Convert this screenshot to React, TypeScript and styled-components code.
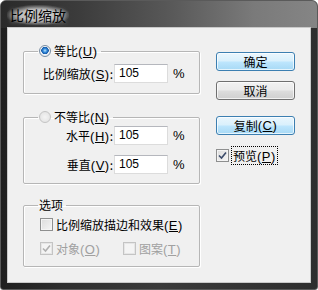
import React from "react";
import styled, { createGlobalStyle } from "styled-components";

const GlobalStyle = createGlobalStyle`
  html, body {
    margin: 0;
    padding: 0;
    background: #ffffff;
  }
  body {
    font-family: "Noto Sans CJK SC", "Liberation Sans", sans-serif;
    font-size: 12px;
    color: #000;
  }
`;

const Window = styled.div`
  width: 318px;
  height: 290px;
  box-sizing: border-box;
  display: flex;
  flex-direction: column;
  border: 1px solid #5a5a5a;
  border-radius: 6px 6px 3px 3px;
  background: linear-gradient(to right, #1f1f1f 0%, #2e2e2e 20%, #3a3a3a 50%, #2e2e2e 100%);
  overflow: hidden;
`;

const TitleBar = styled.div`
  height: 27px;
  flex: none;
  display: flex;
  align-items: center;
  padding-left: 6px;
  background: linear-gradient(to right, #2a2a2a 0%, #3c3c3c 25%, #5a5a5a 55%, #7a7a7a 80%, #858585 100%);
`;

const Title = styled.span`
  font-size: 14px;
  color: #000;
  padding: 0 3px;
  border-radius: 8px;
  background: radial-gradient(ellipse at center, rgba(205, 205, 205, 0.85) 40%, rgba(160, 160, 160, 0) 75%);
  text-shadow: 0 0 4px rgba(255, 255, 255, 0.6);
`;

const Client = styled.div`
  flex: 1;
  margin: 0 7px 7px 7px;
  background: #f0f0f0;
  box-shadow: 0 0 0 1px #c9c9c9;
  display: flex;
  align-items: flex-start;
`;

const LeftColumn = styled.div`
  width: 177px;
  margin-left: 15px;
  padding-top: 16px;
  display: flex;
  flex-direction: column;
`;

const Group = styled.fieldset<{ $gap?: number; $padTop: number; $padBottom: number }>`
  margin: ${(p) => p.$gap ?? 0}px 0 0 0;
  padding: ${(p) => p.$padTop}px 0 ${(p) => p.$padBottom}px 16px;
  border: 1px solid #b6b6b6;
  box-shadow: inset 1px 1px 0 #fff, 1px 1px 0 #fff;
  border-radius: 2px;
  min-width: 0;
  display: flex;
  flex-direction: column;
`;

const Legend = styled.legend`
  margin-left: -2px;
  padding: 0 3px 0 1px;
  height: 14px;
  line-height: 14px;
  display: flex;
  align-items: center;
  gap: 3px;
  font-size: 12px;
`;

const Key = styled.span`
  font-family: "Liberation Sans", sans-serif;
  font-size: 13px;
  letter-spacing: 0.5px;
`;

const Row = styled.div<{ $mt?: number }>`
  display: flex;
  align-items: center;
  height: 20px;
  margin-top: ${(p) => p.$mt ?? 0}px;
`;

const Label = styled.label`
  width: 73px;
  text-align: right;
  white-space: nowrap;
  font-size: 12px;
  padding-right: 1px;
`;

const Input = styled.div`
  width: 54px;
  height: 19px;
  box-sizing: border-box;
  background: #fff;
  border: 1px solid #dcdcdc;
  border-top-color: #b5b7bd;
  padding-left: 4px;
  line-height: 17px;
  font-size: 12px;
  font-family: "Liberation Sans", sans-serif;
`;

const Unit = styled.span`
  margin-left: 5px;
  font-family: "Liberation Sans", sans-serif;
  font-size: 13px;
`;

const Radio = styled.span<{ $on?: boolean }>`
  width: 12px;
  height: 12px;
  box-sizing: border-box;
  border-radius: 50%;
  border: 1px solid ${(p) => (p.$on ? "#7b8fa3" : "#c4c4c4")};
  background: ${(p) =>
    p.$on
      ? "radial-gradient(circle at 50% 45%, #b7e4ff 0, #2f86d6 2px, #185aa8 3.5px, #eef2f6 4px, #e1e6eb 100%)"
      : "radial-gradient(circle, #f4f4f4 0, #e0e0e0 100%)"};
  flex: none;
`;

const CheckBox = styled.span<{ $disabled?: boolean }>`
  width: 13px;
  height: 13px;
  box-sizing: border-box;
  border: 1px solid ${(p) => (p.$disabled ? "#c4c4c4" : "#8e8f8f")};
  background: ${(p) =>
    p.$disabled ? "#f4f4f4" : "linear-gradient(135deg, #dcdcdc 0%, #f5f5f5 100%)"};
  box-shadow: inset 0 0 0 1px ${(p) => (p.$disabled ? "#e6e6e6" : "#f4f4f4")};
  display: flex;
  align-items: center;
  justify-content: center;
  flex: none;
`;

const CheckRow = styled.div<{ $mt?: number }>`
  display: flex;
  align-items: center;
  height: 16px;
  margin-top: ${(p) => p.$mt ?? 0}px;
`;

const CheckItem = styled.label<{ $disabled?: boolean; $width?: number }>`
  display: flex;
  align-items: center;
  gap: 3px;
  width: ${(p) => (p.$width ? `${p.$width}px` : "auto")};
  color: ${(p) => (p.$disabled ? "#a0a0a0" : "#000")};
  font-size: 12px;
  white-space: nowrap;
`;

const FocusText = styled.span`
  outline: 1px dotted #000;
  outline-offset: 0;
  padding: 0 1px;
`;

const RightColumn = styled.div`
  margin-left: 16px;
  padding-top: 24px;
  display: flex;
  flex-direction: column;
  width: 79px;
`;

const Button = styled.div<{ $hot?: boolean; $mt?: number }>`
  height: 19px;
  box-sizing: border-box;
  margin-top: ${(p) => p.$mt ?? 0}px;
  border: 1px solid ${(p) => (p.$hot ? "#3c7fb1" : "#707070")};
  border-radius: 3px;
  background: ${(p) =>
    p.$hot
      ? "linear-gradient(to bottom, #eaf6fd 0%, #d9f0fc 48%, #bee6fd 52%, #a7d9f5 100%)"
      : "linear-gradient(to bottom, #f2f2f2 0%, #ebebeb 48%, #dddddd 52%, #cfcfcf 100%)"};
  box-shadow: inset 0 0 0 1px rgba(255, 255, 255, 0.7);
  display: flex;
  align-items: center;
  justify-content: center;
  font-size: 12px;
`;

const Check = ({ color }: { color: string }) => (
  <svg width="9" height="9" viewBox="0 0 9 9">
    <path d="M1 4.5 L3.5 7 L8 1.5" fill="none" stroke={color} strokeWidth="1.6" />
  </svg>
);

const Hotkey = ({ k }: { k: string }) => (
  <Key>
    (<u>{k}</u>)
  </Key>
);

export default function App() {
  return (
    <>
      <GlobalStyle />
      <Window>
        <TitleBar>
          <Title>比例缩放</Title>
        </TitleBar>
        <Client>
          <LeftColumn>
            <Group $padTop={5} $padBottom={10}>
              <Legend>
                <Radio $on />
                <span>
                  等比<Hotkey k="U" />
                </span>
              </Legend>
              <Row>
                <Label>
                  比例缩放<Hotkey k="S" />:
                </Label>
                <Input>105</Input>
                <Unit>%</Unit>
              </Row>
            </Group>
            <Group $gap={16} $padTop={1} $padBottom={9}>
              <Legend>
                <Radio />
                <span>
                  不等比<Hotkey k="N" />
                </span>
              </Legend>
              <Row>
                <Label>
                  水平<Hotkey k="H" />:
                </Label>
                <Input>105</Input>
                <Unit>%</Unit>
              </Row>
              <Row $mt={9}>
                <Label>
                  垂直<Hotkey k="V" />:
                </Label>
                <Input>105</Input>
                <Unit>%</Unit>
              </Row>
            </Group>
            <Group $gap={14} $padTop={2} $padBottom={10}>
              <Legend>选项</Legend>
              <CheckRow $mt={2}>
                <CheckItem>
                  <CheckBox />
                  <span>
                    比例缩放描边和效果<Hotkey k="E" />
                  </span>
                </CheckItem>
              </CheckRow>
              <CheckRow $mt={8}>
                <CheckItem $disabled $width={83}>
                  <CheckBox $disabled>
                    <Check color="#b0b0b0" />
                  </CheckBox>
                  <span>
                    对象<Hotkey k="O" />
                  </span>
                </CheckItem>
                <CheckItem $disabled>
                  <CheckBox $disabled />
                  <span>
                    图案<Hotkey k="T" />
                  </span>
                </CheckItem>
              </CheckRow>
            </Group>
          </LeftColumn>
          <RightColumn>
            <Button $hot>确定</Button>
            <Button $mt={10}>取消</Button>
            <Button $hot $mt={16}>
              复制<Hotkey k="C" />
            </Button>
            <CheckRow $mt={12}>
              <CheckItem>
                <CheckBox>
                  <Check color="#3b4b6a" />
                </CheckBox>
                <FocusText>
                  预览<Hotkey k="P" />
                </FocusText>
              </CheckItem>
            </CheckRow>
          </RightColumn>
        </Client>
      </Window>
    </>
  );
}
